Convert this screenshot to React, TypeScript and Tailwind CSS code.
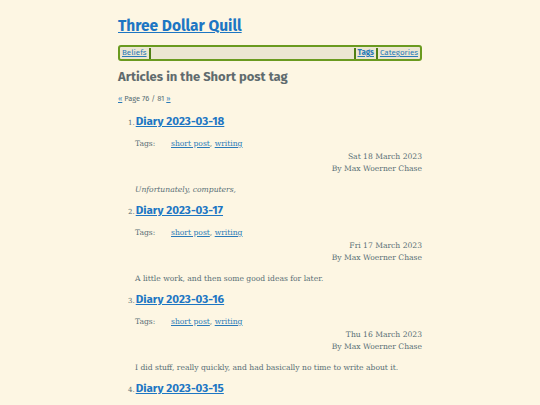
import React from "react";

const items = [
  { n: 1, title: "Diary 2023-03-18", date: "Sat 18 March 2023", summary: "Unfortunately, computers,", italic: true },
  { n: 2, title: "Diary 2023-03-17", date: "Fri 17 March 2023", summary: "A little work, and then some good ideas for later.", italic: false },
  { n: 3, title: "Diary 2023-03-16", date: "Thu 16 March 2023", summary: "I did stuff, really quickly, and had basically no time to write about it.", italic: false },
  { n: 4, title: "Diary 2023-03-15", date: "", summary: "", italic: false },
];

const sans = { fontFamily: '"Fira Sans", "Noto Sans", sans-serif' } as React.CSSProperties;
const serif = { fontFamily: '"Roboto Slab", "DejaVu Serif", serif' } as React.CSSProperties;

export default function App() {
  return (
    <div className="h-[405px] w-full overflow-hidden bg-[#fdf6e3] text-[#586e75]">
      <div className="mx-auto w-[304px] pt-[16px]">
        <h1 className="text-[15.5px] font-bold leading-[20px] text-[#1d76c3] underline" style={sans}>
          Three Dollar Quill
        </h1>
        <nav
          className="mt-[9px] flex h-[16px] items-center rounded-[3px] border-2 border-[#6a9a1f] bg-[#ece6d2] px-[2px] text-[8px] leading-[10px]"
          style={sans}
        >
          <a className="text-[#2a7ab8] underline">Beliefs</a>
          <span className="ml-[2px] h-[11px] w-[2px] bg-[#4f7f14]" />
          <span className="flex-1" />
          <span className="h-[11px] w-[2px] bg-[#4f7f14]" />
          <a className="ml-[2px] font-bold text-[#2a7ab8] underline">Tags</a>
          <span className="ml-[2px] h-[11px] w-[2px] bg-[#4f7f14]" />
          <a className="ml-[2px] text-[#2a7ab8] underline">Categories</a>
        </nav>
        <h2 className="mt-[8px] text-[13px] font-bold leading-[16px] text-[#5f6b6e]" style={sans}>
          Articles in the Short post tag
        </h2>
        <div className="mt-[9px] text-[7.5px] leading-[10px]" style={sans}>
          <a className="text-[#2a7ab8] underline">«</a> Page 76 / 81{" "}
          <a className="text-[#2a7ab8] underline">»</a>
        </div>
        <ol className="mt-[5px]">
          {items.map((it) => (
            <li key={it.n} className="pl-[17px]">
              <div className="flex h-[24px] items-baseline">
                <span className="ml-[-7px] mr-[1px] text-[7px]" style={serif}>
                  {it.n}.
                </span>
                <a className="text-[11.6px] font-bold leading-[24px] text-[#1d76c3] underline" style={sans}>
                  {it.title}
                </a>
              </div>
              {it.date && (
                <>
                  <div className="mt-[5px] flex text-[7.6px] leading-[12px]" style={serif}>
                    <span className="w-[36px]">Tags:</span>
                    <span>
                      <a className="text-[#2a7ab8] underline">short post</a>,{" "}
                      <a className="text-[#2a7ab8] underline">writing</a>
                    </span>
                  </div>
                  <div className="mt-[1px] text-right text-[7.6px] leading-[12px]" style={serif}>
                    <div>{it.date}</div>
                    <div>By Max Woerner Chase</div>
                  </div>
                  <p
                    className={"mt-[9px] h-[12px] text-[7.6px] leading-[12px] " + (it.italic ? "italic" : "")}
                    style={serif}
                  >
                    {it.summary}
                  </p>
                  <div className="h-[2px]" />
                </>
              )}
            </li>
          ))}
        </ol>
      </div>
    </div>
  );
}
